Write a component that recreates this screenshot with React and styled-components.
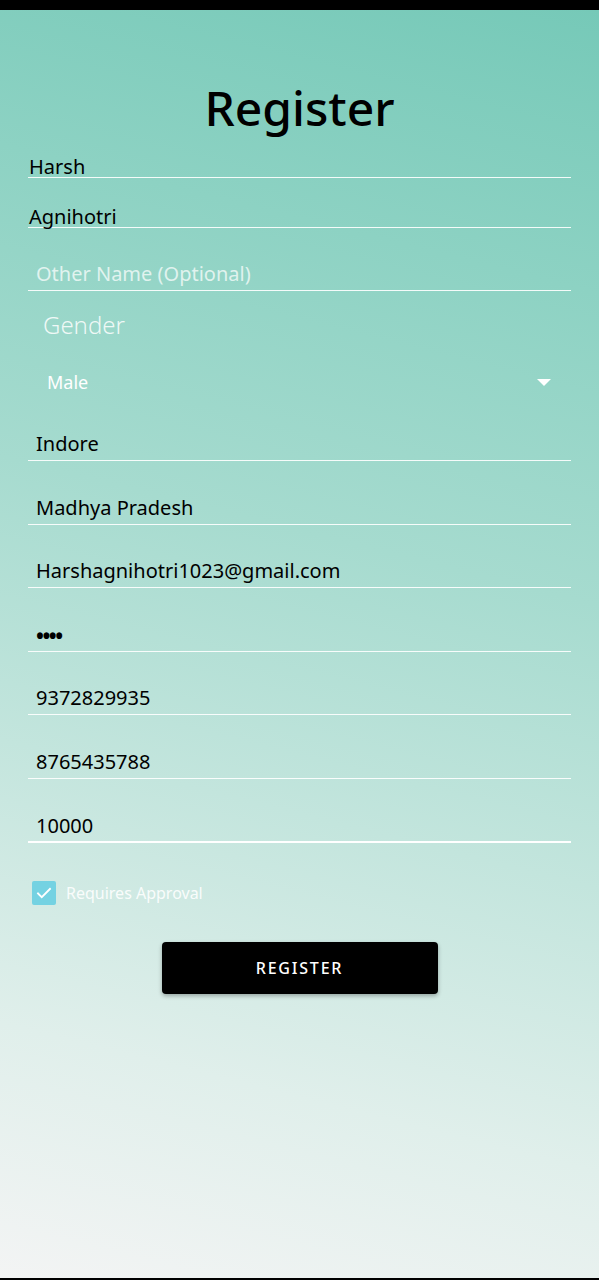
import React from "react";
import styled, { createGlobalStyle } from "styled-components";

const GlobalStyle = createGlobalStyle`
  html, body {
    margin: 0;
    padding: 0;
    background: #000;
  }
  * {
    box-sizing: border-box;
  }
`;

function App() {
  return (
    <Page>
      <GlobalStyle />
      <StatusBar />
      <Screen>
        <Title>Register</Title>
        <Form>
          <TextRow $tight $gap={21}>Harsh</TextRow>
          <TextRow $tight $gap={29}>Agnihotri</TextRow>
          <TextRow $gap={34} $placeholder>
            Other Name (Optional)
          </TextRow>
          <GenderLabel>Gender</GenderLabel>
          <SelectRow>
            <span>Male</span>
            <Caret />
          </SelectRow>
          <TextRow $gap={38}>Indore</TextRow>
          <TextRow>Madhya Pradesh</TextRow>
          <TextRow $gap={34}>Harshagnihotri1023@gmail.com</TextRow>
          <TextRow>
            <Dots>••••</Dots>
          </TextRow>
          <TextRow $gap={34}>9372829935</TextRow>
          <TextRow>8765435788</TextRow>
          <TextRow $focused>10000</TextRow>
          <CheckRow>
            <CheckBox>
              <svg width="18" height="18" viewBox="0 0 24 24" fill="none">
                <path
                  d="M4 12.5l5 5L20 6.5"
                  stroke="#fff"
                  strokeWidth="2.4"
                  strokeLinecap="square"
                />
              </svg>
            </CheckBox>
            <CheckLabel>Requires Approval</CheckLabel>
          </CheckRow>
          <RegisterButton>REGISTER</RegisterButton>
        </Form>
      </Screen>
      <NavLine />
    </Page>
  );
}

const Page = styled.div`
  width: 599px;
  height: 1280px;
  display: flex;
  flex-direction: column;
  font-family: "Noto Sans", "Open Sans", sans-serif;
  overflow: hidden;
`;

const StatusBar = styled.div`
  height: 10px;
  background: #000;
  flex-shrink: 0;
`;

const NavLine = styled.div`
  height: 2px;
  background: #000;
  flex-shrink: 0;
`;

const Screen = styled.div`
  flex: 1;
  padding-top: 70px;
  background: linear-gradient(
    14deg,
    #f3f4f4 0%,
    #e0efeb 18%,
    #c3e5dd 38%,
    #a6dbcf 58%,
    #8dd2c3 80%,
    #76c9b8 100%
  );
`;

const Title = styled.h1`
  margin: 0;
  text-align: center;
  font-size: 48px;
  line-height: 56px;
  font-weight: 500;
  color: #000;
`;

const Form = styled.div`
  padding: 0 28px;
  display: flex;
  flex-direction: column;
`;

const TextRow = styled.div`
  margin-top: ${(p) => (p.$gap !== undefined ? p.$gap : 35)}px;
  padding-left: ${(p) => (p.$tight ? 1 : 8)}px;
  padding-bottom: ${(p) => (p.$tight ? 0 : 4)}px;
  height: ${(p) => (p.$tight ? 21 : 29)}px;
  font-size: 20px;
  line-height: ${(p) => (p.$tight ? 20 : 24)}px;
  color: ${(p) => (p.$placeholder ? "rgba(255, 255, 255, 0.72)" : "#000")};
  border-bottom: ${(p) => (p.$focused ? 2 : 1)}px solid
    rgba(255, 255, 255, ${(p) => (p.$focused ? 1 : 0.9)});
  white-space: nowrap;
`;

const Dots = styled.span`
  display: inline-block;
  height: 24px;
  font-size: 21px;
  line-height: 26px;
  font-weight: 700;
  letter-spacing: -1.5px;
`;

const GenderLabel = styled.div`
  margin-top: 20px;
  padding-left: 15px;
  font-size: 24px;
  line-height: 28px;
  font-weight: 300;
  color: rgba(255, 255, 255, 0.85);
`;

const SelectRow = styled.div`
  margin-top: 31px;
  padding: 0 20px 0 19px;
  height: 24px;
  display: flex;
  align-items: center;
  justify-content: space-between;
  font-size: 18px;
  color: #fff;
`;

const Caret = styled.span`
  width: 0;
  height: 0;
  border-left: 7px solid transparent;
  border-right: 7px solid transparent;
  border-top: 7px solid #fff;
`;

const CheckRow = styled.div`
  margin-top: 38px;
  padding-left: 4px;
  display: flex;
  align-items: center;
  gap: 10px;
  height: 24px;
`;

const CheckBox = styled.span`
  width: 24px;
  height: 24px;
  border-radius: 2px;
  background: #74d2e2;
  display: flex;
  align-items: center;
  justify-content: center;
`;

const CheckLabel = styled.span`
  font-size: 16px;
  color: rgba(255, 255, 255, 0.9);
`;

const RegisterButton = styled.button`
  align-self: center;
  margin-top: 37px;
  width: 276px;
  height: 52px;
  border: none;
  border-radius: 4px;
  background: #000;
  color: #fff;
  font-family: "Noto Sans", "Open Sans", sans-serif;
  font-size: 16px;
  font-weight: 500;
  letter-spacing: 1.8px;
  box-shadow: 0 2px 4px rgba(0, 0, 0, 0.3);
  cursor: pointer;
`;

export default App;
